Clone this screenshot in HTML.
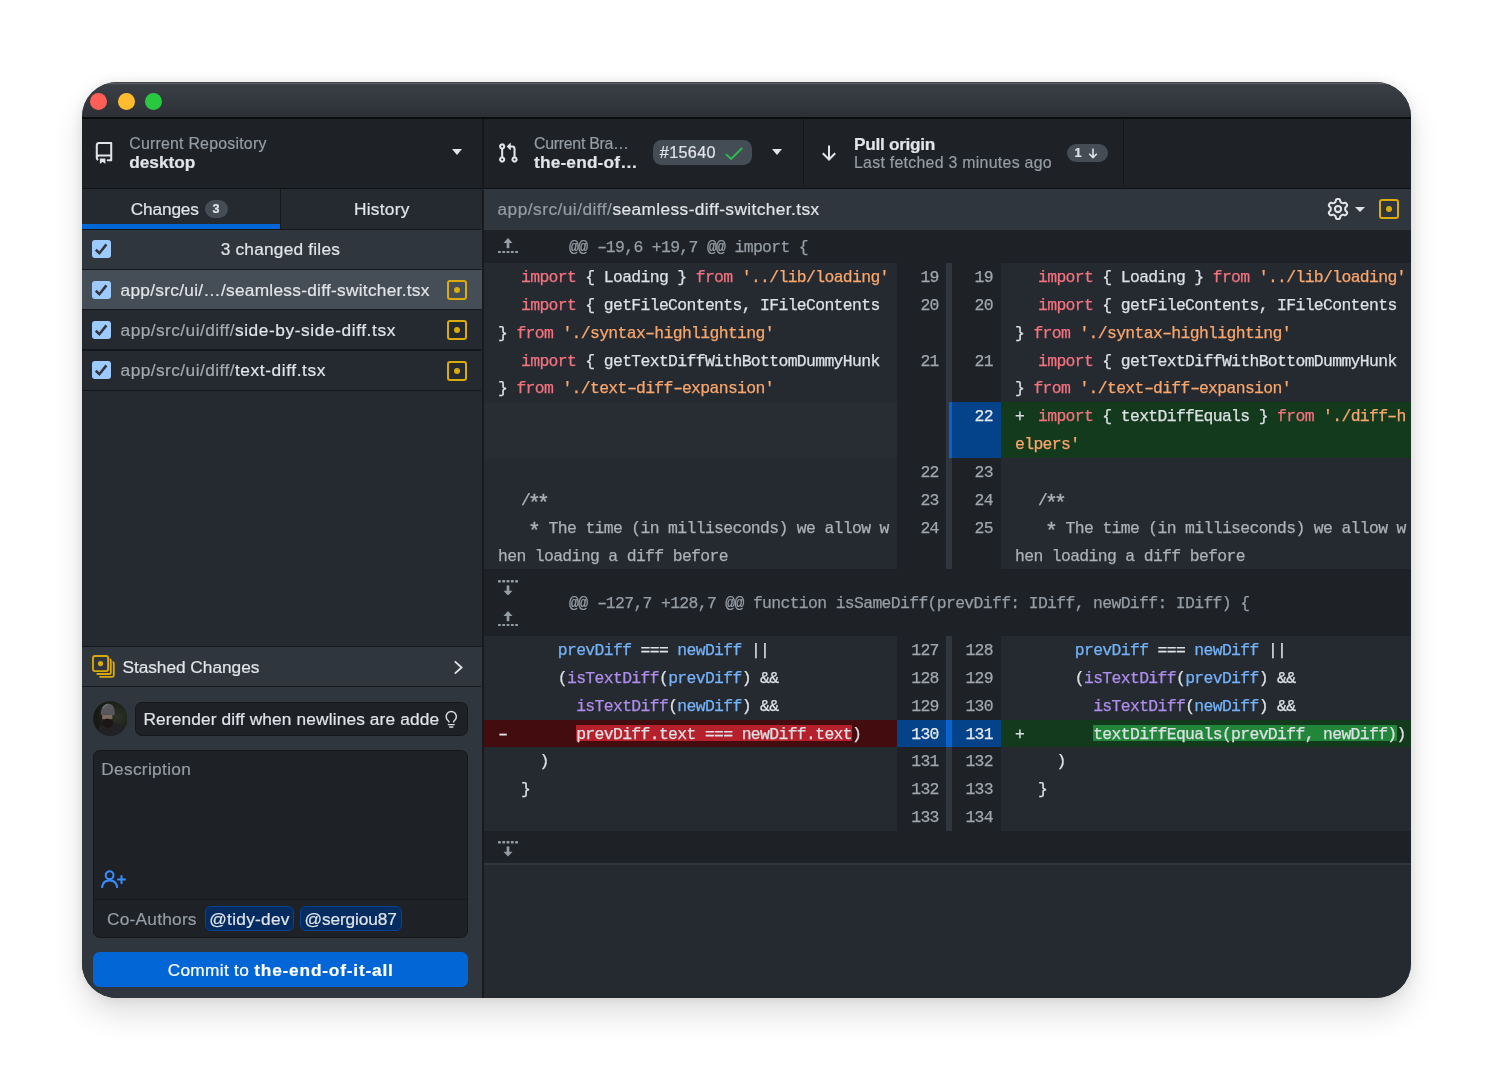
<!DOCTYPE html>
<html lang="en">
<head>
<meta charset="utf-8">
<title>GitHub Desktop</title>
<style>
*{box-sizing:border-box;margin:0;padding:0}
html,body{width:1493px;height:1080px;background:#fff;overflow:hidden}
body{font-family:"Liberation Sans",sans-serif;color:#e1e4e8;font-size:16.4px;position:relative;-webkit-text-stroke:0.2px currentColor}
.a{position:absolute;white-space:nowrap}
#shadow{position:absolute;left:82px;top:82px;width:1329px;height:916px;border-radius:35px;box-shadow:0 16px 30px rgba(0,0,0,.13),0 0 12px rgba(0,0,0,.09)}
#win{will-change:transform;position:absolute;left:82px;top:82px;width:1329px;height:916px;border-radius:35px;overflow:hidden;background:#252a31}
#titlebar{position:absolute;left:0;top:0;width:1329px;height:36px;background:linear-gradient(#3b4048,#2c3035);box-shadow:inset 0 1px 0 rgba(0,0,0,.25),inset 0 2.2px 0 rgba(255,255,255,.16)}
.tl{position:absolute;top:11px;width:17px;height:17px;border-radius:50%}
#toolbar{position:absolute;left:0;top:34.5px;width:1329px;height:73px;background:#1e2125;border-top:2.3px solid #0b0c0e;border-bottom:2.6px solid #0f1113}
.vsep{position:absolute;top:37px;width:1.5px;height:68px;background:#15181b}
.d{font-size:15px;color:#959da5}
.b{font-weight:bold}
.caret{position:absolute;width:0;height:0;border-left:5.5px solid transparent;border-right:5.5px solid transparent;border-top:6px solid #e1e4e8}
#sidebar{position:absolute;left:0;top:107px;width:401px;height:809px;background:#252a31}
#sbb{position:absolute;left:400.1px;top:107.5px;width:2px;height:809px;background:#181a1e}
#main{position:absolute;left:401px;top:107px;width:928px;height:809px;background:#252a31}
.pill{position:absolute;background:#444d56;border-radius:10px}
.cb{position:absolute;left:10.4px;width:18.5px;height:18.4px;border-radius:3px;background:#9ecbff}
.hl{position:absolute;left:0;width:399px;height:1.5px;background:#15181b}
.st{position:absolute;width:20px;height:20px;border:2px solid #dbab09;border-radius:3px}
.st i{position:absolute;left:5px;top:5px;width:6px;height:6px;border-radius:50%;background:#dbab09}
.p{color:#c3c8ce}
.input{position:absolute;background:#1e2126;border:1px solid #15181b;border-radius:7px}
.mono{font-family:"Liberation Mono",monospace;font-size:16.4px;letter-spacing:-0.642px;white-space:pre;-webkit-text-stroke:0.25px currentColor}
.hunk{position:absolute;left:0;width:928px;background:#1e2126;color:#959da5}
.ln{position:absolute;color:#959da5;text-align:right;background:#1e2126;line-height:27.86px;padding-top:1.0px}
.code{position:absolute;background:#252a31}
.t{position:absolute;line-height:27.86px;height:27.86px;color:#dde0e4}
.hy{display:inline-block;transform:scaleX(1.55)}.as{display:inline-block;transform:translate(-0.5px,3.4px) scale(1.3)}
.k{color:#f4727f}.s{color:#f9a76d}.v{color:#74b3f9}.f{color:#af8dec}.c{color:#abb1b8}
</style>
</head>
<body>
<div id="shadow"></div>
<div id="win">
<div id="titlebar">
<div class="tl" style="left:7.8px;background:#fe5f57"></div>
<div class="tl" style="left:35.6px;background:#febc2e"></div>
<div class="tl" style="left:63.2px;background:#28c840"></div>
</div>
<div id="toolbar"></div>
<div class="vsep" style="left:400px"></div>
<div class="vsep" style="left:720.5px"></div>
<div class="vsep" style="left:1040.5px"></div>
<svg class="a" style="left:11.00px;top:59.50px" width="22" height="22" viewBox="0 0 16 16" ><path fill="#e1e4e8" fill-rule="evenodd" d="M2 2.5A2.5 2.5 0 014.5 0h8.75a.75.75 0 01.75.75v12.5a.75.75 0 01-.75.75h-2.5a.75.75 0 110-1.5h1.75v-2h-8a1 1 0 00-.714 1.7.75.75 0 01-1.072 1.05A2.495 2.495 0 012 11.5v-9zm10.5-1V9h-8c-.356 0-.694.074-1 .208V2.5a1 1 0 011-1h8zM5 12.25v3.25a.25.25 0 00.4.2l1.45-1.087a.25.25 0 01.3 0L8.6 15.7a.25.25 0 00.4-.2v-3.25a.25.25 0 00-.25-.25h-3.5a.25.25 0 00-.25.25z"/></svg>
<div class="a" style="left:47.20px;top:54.00px;font-size:15.9px;line-height:1;"><span style="letter-spacing:0.227px;color:#959da5;">Current Repository</span></div>
<div class="a" style="left:47.20px;top:72.00px;font-size:17.3px;line-height:1;"><span style="letter-spacing:-0.005px;font-weight:bold;">desktop</span></div>
<div class="caret" style="left:369.5px;top:67.30000000000001px"></div>
<svg class="a" style="left:415.00px;top:59.50px" width="22" height="22" viewBox="0 0 16 16" ><path fill="#e1e4e8" fill-rule="evenodd" d="M7.177 3.073L9.573.677A.25.25 0 0110 .854v4.792a.25.25 0 01-.427.177L7.177 3.427a.25.25 0 010-.354zM3.75 2.5a.75.75 0 100 1.5.75.75 0 000-1.5zm-2.25.75a2.25 2.25 0 113 2.122v5.256a2.251 2.251 0 11-1.5 0V5.372A2.25 2.25 0 011.5 3.25zM11 2.5h-1V4h1a1 1 0 011 1v5.628a2.251 2.251 0 101.5 0V5A2.5 2.5 0 0011 2.500zm1 10.25a.75.75 0 111.5 0 .75.75 0 01-1.5 0zM3.75 12a.75.75 0 100 1.5.75.75 0 000-1.5z"/></svg>
<div class="a" style="left:452.00px;top:54.00px;font-size:15.9px;line-height:1;"><span style="letter-spacing:-0.280px;color:#959da5;">Current Bra…</span></div>
<div class="a" style="left:452.00px;top:72.00px;font-size:17.3px;line-height:1;"><span style="letter-spacing:0.174px;font-weight:bold;">the-end-of…</span></div>
<div class="pill" style="left:571.1px;top:57.80000000000001px;width:99.1px;height:25.2px;border-radius:8.5px;background:#444c56"></div>
<div class="a" style="left:577.80px;top:62.00px;font-size:16.2px;line-height:1;"><span style="letter-spacing:0.348px;">#15640</span></div>
<svg class="a" style="left:642.00px;top:63.50px" width="20" height="15" viewBox="0 0 20 15" ><path d="M1.9 8.1L7.1 13L18.200 2" fill="none" stroke="#2dba4e" stroke-width="1.9"/></svg>
<div class="caret" style="left:689.6px;top:67.30000000000001px"></div>
<svg class="a" style="left:739.00px;top:62.00px" width="16" height="18" viewBox="0 0 16 18" ><path d="M8 1.5V15.5M1.8 9.3L8 15.5L14.2 9.3" fill="none" stroke="#e1e4e8" stroke-width="2"/></svg>
<div class="a" style="left:772.00px;top:54.00px;font-size:17.3px;line-height:1;"><span style="letter-spacing:-0.307px;font-weight:bold;">Pull origin</span></div>
<div class="a" style="left:772.00px;top:73.00px;font-size:15.9px;line-height:1;"><span style="letter-spacing:0.271px;color:#959da5;">Last fetched 3 minutes ago</span></div>
<div class="pill" style="left:984.5px;top:61.5px;width:41.5px;height:18.5px;border-radius:10px;background:#444c56"></div>
<div class="a" style="left:992.50px;top:65.00px;font-size:12.6px;line-height:1;"><span style="letter-spacing:0.000px;font-weight:bold;">1</span></div>
<svg class="a" style="left:1006.00px;top:65.50px" width="10" height="11" viewBox="0 0 10 11" ><path d="M5 .5V9.5M1.2 5.8L5 9.6L8.8 5.8" fill="none" stroke="#e1e4e8" stroke-width="1.6"/></svg>
<div id="sidebar"></div>
<div class="a" style="left:0;top:142.2px;width:197.5px;height:4.5px;background:#0366d6"></div>
<div class="a" style="left:197.5px;top:107px;width:1.4px;height:40px;background:#15181b"></div>
<div class="a" style="left:48.80px;top:119.00px;font-size:17.3px;line-height:1;"><span style="letter-spacing:-0.175px;">Changes</span></div>
<div class="pill" style="left:123px;top:117.80000000000001px;width:23.2px;height:18.2px;background:#444c56"></div>
<div class="a" style="left:130.60px;top:121.00px;font-size:12.6px;line-height:1;"><span style="letter-spacing:0.000px;font-weight:bold;">3</span></div>
<div class="a" style="left:272.00px;top:119.00px;font-size:17.3px;line-height:1;"><span style="letter-spacing:0.262px;">History</span></div>
<div class="hl" style="top:146.6px"></div>
<div class="a" style="left:0;top:147.6px;width:400.4px;height:39.7px;background:#2f363d"></div>
<div class="cb" style="top:158.00px"><svg class="a" style="left:0;top:0" width="18.5" height="18.5" viewBox="0 0 18.5 18.5"><path d="M3.800 9.800L7.400 13.200L14.400 4.400" fill="none" stroke="#33363a" stroke-width="2.600"/></svg></div>
<div class="a" style="left:138.70px;top:159.00px;font-size:17.3px;line-height:1;"><span style="letter-spacing:0.209px;">3 changed files</span></div>
<div class="hl" style="top:186.60px"></div>
<div class="a" style="left:0;top:188.00px;width:400.4px;height:38.7px;background:#454d57"></div>
<div class="cb" style="top:198.50px"><svg class="a" style="left:0;top:0" width="18.5" height="18.5" viewBox="0 0 18.5 18.5"><path d="M3.800 9.800L7.400 13.200L14.400 4.400" fill="none" stroke="#33363a" stroke-width="2.600"/></svg></div>
<div class="a" style="left:38.60px;top:200.00px;font-size:17.3px;line-height:1;"><span style="letter-spacing:0.274px;">app/src/ui/…/seamless-diff-switcher.tsx</span></div>
<div class="st" style="left:365.3px;top:198.00px"><i></i></div>
<div class="hl" style="top:226.90px"></div>
<div class="cb" style="top:238.80px"><svg class="a" style="left:0;top:0" width="18.5" height="18.5" viewBox="0 0 18.5 18.5"><path d="M3.800 9.800L7.400 13.200L14.400 4.400" fill="none" stroke="#33363a" stroke-width="2.600"/></svg></div>
<div class="a" style="left:38.60px;top:240.00px;font-size:17.3px;line-height:1;"><span style="letter-spacing:0.441px;color:#a3aab1;">app/src/ui/diff/</span><span style="letter-spacing:0.590px;">side-by-side-diff.tsx</span></div>
<div class="st" style="left:365.3px;top:238.30px"><i></i></div>
<div class="hl" style="top:267.20px"></div>
<div class="cb" style="top:279.10px"><svg class="a" style="left:0;top:0" width="18.5" height="18.5" viewBox="0 0 18.5 18.5"><path d="M3.800 9.800L7.400 13.200L14.400 4.400" fill="none" stroke="#33363a" stroke-width="2.600"/></svg></div>
<div class="a" style="left:38.60px;top:280.00px;font-size:17.3px;line-height:1;"><span style="letter-spacing:0.441px;color:#a3aab1;">app/src/ui/diff/</span><span style="letter-spacing:0.598px;">text-diff.tsx</span></div>
<div class="st" style="left:365.3px;top:278.60px"><i></i></div>
<div class="hl" style="top:307.8px"></div>
<div class="a" style="left:0;top:565px;width:400.4px;height:351px;background:#2f363d"></div>
<div class="hl" style="top:563.6px"></div>
<div class="hl" style="top:603.8px"></div>
<svg class="a" style="left:10.30px;top:573.20px" width="23" height="23" viewBox="0 0 23 23" ><g fill="none" stroke="#d9a90a" stroke-width="1.85"><rect x="1" y="1" width="15.100" height="15.100" rx="2"/><path d="M17.600 4.200Q18.800 4.300 18.800 5.700V17.400Q18.800 19 17.200 19H4.600M20.600 7Q21.800 7.100 21.800 8.500V20.300Q21.800 21.800 20.300 21.800H7.400"/></g><circle cx="8.500" cy="8.600" r="2.600" fill="#dbab09"/></svg>
<div class="a" style="left:40.40px;top:577.00px;font-size:17.3px;line-height:1;"><span style="letter-spacing:-0.031px;">Stashed Changes</span></div>
<svg class="a" style="left:371.20px;top:577.50px" width="11" height="15" viewBox="0 0 11 15" ><path d="M1.800 1.300L8.600 7.500L1.800 13.700" fill="none" stroke="#e1e4e8" stroke-width="1.800"/></svg>
<svg class="a" style="left:10.70px;top:619.30px" width="34.8" height="35" viewBox="0 0 34.8 35" ><defs><clipPath id="avc"><circle cx="17.4" cy="17.5" r="17.300"/></clipPath><radialGradient id="avg" cx="70%" cy="45%" r="75%"><stop offset="0" stop-color="#2c3326"/><stop offset=".55" stop-color="#1d2119"/><stop offset="1" stop-color="#131511"/></radialGradient><filter id="avb" x="-10%" y="-10%" width="120%" height="120%"><feGaussianBlur stdDeviation=".6"/></filter></defs><g clip-path="url(#avc)"><rect width="35" height="35" fill="url(#avg)"/><g filter="url(#avb)"><path d="M3.500 36L5 28C6.500 25 9.500 23.500 12 22.800L20.500 21.500C24 22.500 28.500 24.500 31.500 28L34 36z" fill="#232427"/><path d="M9.200 13.500h10.200v5.500c0 2-1.500 3.500-5.100 3.500s-5.100-1.500-5.100-3.500z" fill="#7f6c61"/><path d="M9.400 17.800c1.500.8 3 .600 5-.200 2 .800 3.500 1 5.200.200l.6 5c-.5 2.500-2.500 4-5.500 4s-5-1.500-5.600-4z" fill="#1c1917"/><path d="M7.800 14.200C7.200 7 11 2.700 15.300 2.700c4.700 0 7 4.300 6.300 11.800C18 13 11.500 12.800 7.800 14.200z" fill="#58595b"/><path d="M10 7c1.500-2.500 3.500-3.500 5.500-3.500" stroke="#6b6d6e" stroke-width="1.500" fill="none"/></g></g></svg>
<div class="input" style="left:52.5px;top:619.6px;width:333.5px;height:34.4px"></div>
<div class="a" style="left:61.40px;top:629.00px;font-size:17.3px;line-height:1;"><span style="letter-spacing:0.140px;">Rerender diff when newlines are adde</span></div>
<svg class="a" style="left:363.00px;top:627.50px" width="13" height="18.5" viewBox="0 0 13 18.500" ><g fill="none" stroke="#d9dce0" stroke-width="1.500"><path d="M4 12.400C4 11.400 3.400 10.900 2.650 10.200A5.100 5.100 0 1 1 9.850 10.200C9.100 10.900 8.500 11.400 8.500 12.400"/><path d="M2.800 14.600H9.700M4.200 17H8.300" stroke-width="1.400"/></g></svg>
<div class="input" style="left:10.799999999999997px;top:668px;width:375.4px;height:187.8px"></div>
<div class="a" style="left:19.20px;top:679.00px;font-size:17.3px;line-height:1;"><span style="letter-spacing:0.327px;color:#959da5;">Description</span></div>
<svg class="a" style="left:19.00px;top:788.00px" width="26" height="19" viewBox="0 0 26 19" ><g fill="none" stroke="#388bfd" stroke-width="2.100"><circle cx="8.600" cy="5.200" r="3.900"/><path d="M.9 17.800c.6-4.600 3.600-7.400 7.700-7.400s7.100 2.800 7.700 7.400"/><path d="M20.500 5.300v8.600M16.200 9.600h8.600" stroke-width="2"/></g></svg>
<div class="a" style="left:11.5px;top:817px;width:374px;height:1.3px;background:#15181b"></div>
<div class="a" style="left:25.00px;top:829.00px;font-size:17.3px;line-height:1;"><span style="letter-spacing:0.234px;color:#959da5;">Co-Authors</span></div>
<div class="a" style="left:122.70px;top:824.3px;width:89.3px;height:24.7px;border-radius:6px;background:#042c60;border:1.3px solid #0a4291"></div>
<div class="a" style="left:127.30px;top:829.00px;font-size:17.3px;line-height:1;"><span style="letter-spacing:0.270px;">@tidy-dev</span></div>
<div class="a" style="left:217.90px;top:824.3px;width:101.9px;height:24.7px;border-radius:6px;background:#042c60;border:1.3px solid #0a4291"></div>
<div class="a" style="left:222.50px;top:829.00px;font-size:17.3px;line-height:1;"><span style="letter-spacing:-0.127px;">@sergiou87</span></div>
<div class="a" style="left:10.599999999999994px;top:870px;width:375.6px;height:35px;border-radius:6.5px;background:#0366d6"></div>
<div class="a" style="left:85.70px;top:880.00px;font-size:17.3px;line-height:1;"><span style="letter-spacing:0.297px;color:#fff;">Commit to </span><span style="letter-spacing:0.807px;font-weight:bold;color:#fff;">the-end-of-it-all</span></div>
<div id="main"></div>
<div class="a" style="left:401px;top:107px;width:928px;height:40.5px;background:#2f363d"></div>
<div class="a" style="left:415.50px;top:119.00px;font-size:17.3px;line-height:1;"><span style="letter-spacing:0.475px;color:#959da5;">app/src/ui/diff/</span><span style="letter-spacing:0.409px;">seamless-diff-switcher.tsx</span></div>
<svg class="a" style="left:1244.50px;top:116.00px" width="22" height="22" viewBox="0 0 16 16" ><path fill="#e1e4e8" fill-rule="evenodd" d="M7.429 1.525a6.593 6.593 0 011.142 0c.036.003.108.036.137.146l.289 1.105c.147.560.55.967.997 1.189.174.086.341.183.501.29.417.278.97.423 1.530.27l1.102-.303c.11-.03.175.016.195.046.219.31.41.641.573.989.014.031.022.11-.059.19l-.815.806c-.411.406-.562.957-.53 1.456a4.588 4.588 0 010 .582c-.032.499.119 1.050.53 1.456l.815.806c.08.08.073.159.059.19a6.494 6.494 0 01-.573.990c-.02.029-.086.074-.195.045l-1.103-.303c-.559-.153-1.112-.008-1.529.27-.16.107-.327.204-.5.290-.449.222-.851.628-.998 1.189l-.289 1.105c-.029.110-.101.143-.137.146a6.613 6.613 0 01-1.142 0c-.036-.003-.108-.037-.137-.146l-.289-1.105c-.147-.560-.55-.967-.997-1.189a4.502 4.502 0 01-.501-.29c-.417-.278-.97-.423-1.530-.270l-1.102.303c-.110.030-.175-.016-.195-.046a6.492 6.492 0 01-.573-.989c-.014-.031-.022-.110.059-.190l.815-.806c.411-.406.562-.957.530-1.456a4.587 4.587 0 010-.582c.032-.499-.119-1.050-.530-1.456l-.815-.806c-.080-.080-.073-.159-.059-.190a6.440 6.440 0 01.573-.99c.020-.029.086-.075.195-.045l1.103.303c.559.153 1.112.008 1.529-.270.160-.107.327-.204.500-.29.449-.222.851-.628.998-1.189l.289-1.105c.029-.110.101-.143.137-.146zM8 0c-.236 0-.47.010-.701.030-.743.065-1.290.615-1.458 1.261l-.290 1.106c-.017.066-.078.158-.211.224a5.994 5.994 0 00-.668.386c-.123.082-.233.090-.300.071L3.270 2.776c-.644-.177-1.392.020-1.820.63a7.977 7.977 0 00-.704 1.217c-.315.675-.111 1.422.363 1.891l.815.806c.050.048.098.147.088.294a6.084 6.084 0 000 .772c.010.147-.038.246-.088.294l-.815.806c-.474.469-.678 1.216-.363 1.891.200.428.436.835.704 1.218.428.609 1.176.806 1.820.630l1.103-.303c.066-.019.176-.011.299.071.213.143.436.272.668.386.133.066.194.158.212.224l.289 1.106c.169.646.715 1.196 1.458 1.260a8.094 8.094 0 001.402 0c.743-.064 1.290-.614 1.458-1.260l.290-1.106c.017-.066.078-.158.211-.224a5.980 5.980 0 00.668-.386c.123-.082.233-.090.300-.071l1.102.302c.644.177 1.392-.020 1.820-.630.268-.382.505-.789.704-1.217.315-.675.111-1.422-.364-1.891l-.814-.806c-.050-.048-.098-.147-.088-.294a6.100 6.100 0 000-.772c-.010-.147.039-.246.088-.294l.814-.806c.475-.469.679-1.216.364-1.891a7.992 7.992 0 00-.704-1.218c-.428-.609-1.176-.806-1.820-.630l-1.103.303c-.066.019-.176.011-.299-.071a5.991 5.991 0 00-.668-.386c-.133-.066-.194-.158-.212-.224L10.160 1.290C9.990.645 9.444.095 8.701.031A8.094 8.094 0 008 0zm1.500 8a1.500 1.500 0 11-3 0 1.500 1.500 0 013 0zM11 8a3 3 0 11-6 0 3 3 0 016 0z"/></svg>
<div class="caret" style="left:1273px;top:124.5px;border-left-width:5px;border-right-width:5px;border-top-width:5.5px"></div>
<div class="st" style="left:1297px;top:117px"><i></i></div>
<div class="hunk" style="left:401px;top:147.50px;height:33.50px"></div>
<svg class="a" style="left:416.00px;top:155.90px" width="20" height="15.6" viewBox="0 0 20 15.6" ><g fill="#959da5"><rect x="0" y="13.1" width="2.8" height="2.5" rx=".5"/><rect x="4.3" y="13.1" width="2.8" height="2.5" rx=".5"/><rect x="8.6" y="13.1" width="2.8" height="2.5" rx=".5"/><rect x="12.9" y="13.1" width="2.8" height="2.5" rx=".5"/><rect x="17.2" y="13.1" width="2.8" height="2.5" rx=".5"/><rect x="8.65" y="4.200" width="2.7" height="6"/><path d="M5.500 4.900H14.500L10 0z"/></g></svg>
<div class="a mono" style="left:487.00px;top:151.50px;line-height:27.86px;color:#959da5">@@ <span class="hy">-</span>19,6 +19,7 @@ import {</div>
<div class="code" style="left:401.00px;top:181.00px;width:414.40px;height:27.86px;background:#252a31"></div>
<div class="a mono t" style="left:439.00px;top:182.00px;"><span class="k">import</span> { Loading } <span class="k">from</span> <span class="s">'../lib/loading'</span></div>
<div class="ln mono" style="left:815.40px;top:181.00px;width:48.90px;height:27.86px;padding-right:7.5px;background:#1e2126;color:#a0a7ae">19</div>
<div class="a" style="left:864.30px;top:181.00px;width:2.85px;height:27.86px;background:#2f363d"></div>
<div class="a" style="left:867.15px;top:181.00px;width:2.85px;height:27.86px;background:#2f363d"></div>
<div class="ln mono" style="left:870.00px;top:181.00px;width:48.50px;height:27.86px;padding-right:7.5px;background:#1e2126;color:#a0a7ae">19</div>
<div class="code" style="left:918.50px;top:181.00px;width:410.50px;height:27.86px;background:#252a31"></div>
<div class="a mono t" style="left:956.00px;top:182.00px;"><span class="k">import</span> { Loading } <span class="k">from</span> <span class="s">'../lib/loading'</span></div>
<div class="code" style="left:401.00px;top:208.86px;width:414.40px;height:55.72px;background:#252a31"></div>
<div class="a mono t" style="left:439.00px;top:209.86px;"><span class="k">import</span> { getFileContents, IFileContents</div>
<div class="a mono t" style="left:416.00px;top:237.72px;">} <span class="k">from</span> <span class="s">'./syntax<span class="hy">-</span>highlighting'</span></div>
<div class="ln mono" style="left:815.40px;top:208.86px;width:48.90px;height:55.72px;padding-right:7.5px;background:#1e2126;color:#a0a7ae">20</div>
<div class="a" style="left:864.30px;top:208.86px;width:2.85px;height:55.72px;background:#2f363d"></div>
<div class="a" style="left:867.15px;top:208.86px;width:2.85px;height:55.72px;background:#2f363d"></div>
<div class="ln mono" style="left:870.00px;top:208.86px;width:48.50px;height:55.72px;padding-right:7.5px;background:#1e2126;color:#a0a7ae">20</div>
<div class="code" style="left:918.50px;top:208.86px;width:410.50px;height:55.72px;background:#252a31"></div>
<div class="a mono t" style="left:956.00px;top:209.86px;"><span class="k">import</span> { getFileContents, IFileContents</div>
<div class="a mono t" style="left:933.00px;top:237.72px;">} <span class="k">from</span> <span class="s">'./syntax<span class="hy">-</span>highlighting'</span></div>
<div class="code" style="left:401.00px;top:264.58px;width:414.40px;height:55.72px;background:#252a31"></div>
<div class="a mono t" style="left:439.00px;top:265.58px;"><span class="k">import</span> { getTextDiffWithBottomDummyHunk</div>
<div class="a mono t" style="left:416.00px;top:293.44px;">} <span class="k">from</span> <span class="s">'./text<span class="hy">-</span>diff<span class="hy">-</span>expansion'</span></div>
<div class="ln mono" style="left:815.40px;top:264.58px;width:48.90px;height:55.72px;padding-right:7.5px;background:#1e2126;color:#a0a7ae">21</div>
<div class="a" style="left:864.30px;top:264.58px;width:2.85px;height:55.72px;background:#2f363d"></div>
<div class="a" style="left:867.15px;top:264.58px;width:2.85px;height:55.72px;background:#2f363d"></div>
<div class="ln mono" style="left:870.00px;top:264.58px;width:48.50px;height:55.72px;padding-right:7.5px;background:#1e2126;color:#a0a7ae">21</div>
<div class="code" style="left:918.50px;top:264.58px;width:410.50px;height:55.72px;background:#252a31"></div>
<div class="a mono t" style="left:956.00px;top:265.58px;"><span class="k">import</span> { getTextDiffWithBottomDummyHunk</div>
<div class="a mono t" style="left:933.00px;top:293.44px;">} <span class="k">from</span> <span class="s">'./text<span class="hy">-</span>diff<span class="hy">-</span>expansion'</span></div>
<div class="code" style="left:401.00px;top:320.30px;width:414.40px;height:55.72px;background:#282d33"></div>
<div class="a mono t" style="left:439.00px;top:321.30px;"></div>
<div class="a mono t" style="left:416.00px;top:349.16px;"></div>
<div class="ln mono" style="left:815.40px;top:320.30px;width:48.90px;height:55.72px;padding-right:7.5px;background:#1e2126;color:#a0a7ae"></div>
<div class="a" style="left:864.30px;top:320.30px;width:2.85px;height:55.72px;background:#2f363d"></div>
<div class="a" style="left:867.15px;top:320.30px;width:2.85px;height:55.72px;background:#0b62cf"></div>
<div class="ln mono" style="left:870.00px;top:320.30px;width:48.50px;height:55.72px;padding-right:7.5px;background:#044289;color:#e6e9ec">22</div>
<div class="code" style="left:918.50px;top:320.30px;width:410.50px;height:55.72px;background:#143a1d"></div>
<div class="a mono t" style="left:933.00px;top:321.30px;">+</div>
<div class="a mono t" style="left:956.00px;top:321.30px;"><span class="k">import</span> { textDiffEquals } <span class="k">from</span> <span class="s">'./diff<span class="hy">-</span>h</span></div>
<div class="a mono t" style="left:933.00px;top:349.16px;"><span class="s">elpers'</span></div>
<div class="code" style="left:401.00px;top:376.02px;width:414.40px;height:27.86px;background:#252a31"></div>
<div class="a mono t" style="left:439.00px;top:377.02px;"></div>
<div class="ln mono" style="left:815.40px;top:376.02px;width:48.90px;height:27.86px;padding-right:7.5px;background:#1e2126;color:#a0a7ae">22</div>
<div class="a" style="left:864.30px;top:376.02px;width:2.85px;height:27.86px;background:#2f363d"></div>
<div class="a" style="left:867.15px;top:376.02px;width:2.85px;height:27.86px;background:#2f363d"></div>
<div class="ln mono" style="left:870.00px;top:376.02px;width:48.50px;height:27.86px;padding-right:7.5px;background:#1e2126;color:#a0a7ae">23</div>
<div class="code" style="left:918.50px;top:376.02px;width:410.50px;height:27.86px;background:#252a31"></div>
<div class="a mono t" style="left:956.00px;top:377.02px;"></div>
<div class="code" style="left:401.00px;top:403.88px;width:414.40px;height:27.86px;background:#252a31"></div>
<div class="a mono t" style="left:439.00px;top:404.88px;"><span class="c">/<span class="as">*</span><span class="as">*</span></span></div>
<div class="ln mono" style="left:815.40px;top:403.88px;width:48.90px;height:27.86px;padding-right:7.5px;background:#1e2126;color:#a0a7ae">23</div>
<div class="a" style="left:864.30px;top:403.88px;width:2.85px;height:27.86px;background:#2f363d"></div>
<div class="a" style="left:867.15px;top:403.88px;width:2.85px;height:27.86px;background:#2f363d"></div>
<div class="ln mono" style="left:870.00px;top:403.88px;width:48.50px;height:27.86px;padding-right:7.5px;background:#1e2126;color:#a0a7ae">24</div>
<div class="code" style="left:918.50px;top:403.88px;width:410.50px;height:27.86px;background:#252a31"></div>
<div class="a mono t" style="left:956.00px;top:404.88px;"><span class="c">/<span class="as">*</span><span class="as">*</span></span></div>
<div class="code" style="left:401.00px;top:431.74px;width:414.40px;height:55.72px;background:#252a31"></div>
<div class="a mono t" style="left:439.00px;top:432.74px;"><span class="c"> <span class="as">*</span> The time (in milliseconds) we allow w</span></div>
<div class="a mono t" style="left:416.00px;top:460.60px;"><span class="c">hen loading a diff before</span></div>
<div class="ln mono" style="left:815.40px;top:431.74px;width:48.90px;height:55.72px;padding-right:7.5px;background:#1e2126;color:#a0a7ae">24</div>
<div class="a" style="left:864.30px;top:431.74px;width:2.85px;height:55.72px;background:#2f363d"></div>
<div class="a" style="left:867.15px;top:431.74px;width:2.85px;height:55.72px;background:#2f363d"></div>
<div class="ln mono" style="left:870.00px;top:431.74px;width:48.50px;height:55.72px;padding-right:7.5px;background:#1e2126;color:#a0a7ae">25</div>
<div class="code" style="left:918.50px;top:431.74px;width:410.50px;height:55.72px;background:#252a31"></div>
<div class="a mono t" style="left:956.00px;top:432.74px;"><span class="c"> <span class="as">*</span> The time (in milliseconds) we allow w</span></div>
<div class="a mono t" style="left:933.00px;top:460.60px;"><span class="c">hen loading a diff before</span></div>
<div class="hunk" style="left:401px;top:487.46px;height:66.50px"></div>
<svg class="a" style="left:416.00px;top:497.76px" width="20" height="15.6" viewBox="0 0 20 15.6" ><g fill="#959da5"><rect x="0" y="0" width="2.8" height="2.5" rx=".5"/><rect x="4.3" y="0" width="2.8" height="2.5" rx=".5"/><rect x="8.6" y="0" width="2.8" height="2.5" rx=".5"/><rect x="12.9" y="0" width="2.8" height="2.5" rx=".5"/><rect x="17.2" y="0" width="2.8" height="2.5" rx=".5"/><rect x="8.65" y="5.4" width="2.7" height="6"/><path d="M5.5 10.700H14.500L10 15.600z"/></g></svg>
<svg class="a" style="left:416.00px;top:528.66px" width="20" height="15.6" viewBox="0 0 20 15.6" ><g fill="#959da5"><rect x="0" y="13.1" width="2.8" height="2.5" rx=".5"/><rect x="4.3" y="13.1" width="2.8" height="2.5" rx=".5"/><rect x="8.6" y="13.1" width="2.8" height="2.5" rx=".5"/><rect x="12.9" y="13.1" width="2.8" height="2.5" rx=".5"/><rect x="17.2" y="13.1" width="2.8" height="2.5" rx=".5"/><rect x="8.65" y="4.200" width="2.7" height="6"/><path d="M5.500 4.900H14.500L10 0z"/></g></svg>
<div class="a mono" style="left:487.00px;top:507.96px;line-height:27.86px;color:#959da5">@@ <span class="hy">-</span>127,7 +128,7 @@ function isSameDiff(prevDiff: IDiff, newDiff: IDiff) {</div>
<div class="code" style="left:401.00px;top:553.96px;width:414.40px;height:27.86px;background:#252a31"></div>
<div class="a mono t" style="left:439.00px;top:554.96px;">    <span class="v">prevDiff</span> === <span class="v">newDiff</span> ||</div>
<div class="ln mono" style="left:815.40px;top:553.96px;width:48.90px;height:27.86px;padding-right:7.5px;background:#1e2126;color:#a0a7ae">127</div>
<div class="a" style="left:864.30px;top:553.96px;width:2.85px;height:27.86px;background:#2f363d"></div>
<div class="a" style="left:867.15px;top:553.96px;width:2.85px;height:27.86px;background:#2f363d"></div>
<div class="ln mono" style="left:870.00px;top:553.96px;width:48.50px;height:27.86px;padding-right:7.5px;background:#1e2126;color:#a0a7ae">128</div>
<div class="code" style="left:918.50px;top:553.96px;width:410.50px;height:27.86px;background:#252a31"></div>
<div class="a mono t" style="left:956.00px;top:554.96px;">    <span class="v">prevDiff</span> === <span class="v">newDiff</span> ||</div>
<div class="code" style="left:401.00px;top:581.82px;width:414.40px;height:27.86px;background:#252a31"></div>
<div class="a mono t" style="left:439.00px;top:582.82px;">    (<span class="f">isTextDiff</span>(<span class="v">prevDiff</span>) &amp;&amp;</div>
<div class="ln mono" style="left:815.40px;top:581.82px;width:48.90px;height:27.86px;padding-right:7.5px;background:#1e2126;color:#a0a7ae">128</div>
<div class="a" style="left:864.30px;top:581.82px;width:2.85px;height:27.86px;background:#2f363d"></div>
<div class="a" style="left:867.15px;top:581.82px;width:2.85px;height:27.86px;background:#2f363d"></div>
<div class="ln mono" style="left:870.00px;top:581.82px;width:48.50px;height:27.86px;padding-right:7.5px;background:#1e2126;color:#a0a7ae">129</div>
<div class="code" style="left:918.50px;top:581.82px;width:410.50px;height:27.86px;background:#252a31"></div>
<div class="a mono t" style="left:956.00px;top:582.82px;">    (<span class="f">isTextDiff</span>(<span class="v">prevDiff</span>) &amp;&amp;</div>
<div class="code" style="left:401.00px;top:609.68px;width:414.40px;height:27.86px;background:#252a31"></div>
<div class="a mono t" style="left:439.00px;top:610.68px;">      <span class="f">isTextDiff</span>(<span class="v">newDiff</span>) &amp;&amp;</div>
<div class="ln mono" style="left:815.40px;top:609.68px;width:48.90px;height:27.86px;padding-right:7.5px;background:#1e2126;color:#a0a7ae">129</div>
<div class="a" style="left:864.30px;top:609.68px;width:2.85px;height:27.86px;background:#2f363d"></div>
<div class="a" style="left:867.15px;top:609.68px;width:2.85px;height:27.86px;background:#2f363d"></div>
<div class="ln mono" style="left:870.00px;top:609.68px;width:48.50px;height:27.86px;padding-right:7.5px;background:#1e2126;color:#a0a7ae">130</div>
<div class="code" style="left:918.50px;top:609.68px;width:410.50px;height:27.86px;background:#252a31"></div>
<div class="a mono t" style="left:956.00px;top:610.68px;">      <span class="f">isTextDiff</span>(<span class="v">newDiff</span>) &amp;&amp;</div>
<div class="code" style="left:401.00px;top:637.54px;width:414.40px;height:27.86px;background:#430d10"></div>
<div class="a mono t" style="left:416.00px;top:638.54px;"><span class="hy">-</span></div>
<div class="a" style="left:494.20px;top:642.84px;width:276.00px;height:16.6px;background:#b5202b"></div>
<div class="a mono t" style="left:439.00px;top:638.54px;">      prevDiff.text === newDiff.text)</div>
<div class="ln mono" style="left:815.40px;top:637.54px;width:48.90px;height:27.86px;padding-right:7.5px;background:#044289;color:#e6e9ec">130</div>
<div class="a" style="left:864.30px;top:637.54px;width:2.85px;height:27.86px;background:#0b62cf"></div>
<div class="a" style="left:867.15px;top:637.54px;width:2.85px;height:27.86px;background:#0b62cf"></div>
<div class="ln mono" style="left:870.00px;top:637.54px;width:48.50px;height:27.86px;padding-right:7.5px;background:#044289;color:#e6e9ec">131</div>
<div class="code" style="left:918.50px;top:637.54px;width:410.50px;height:27.86px;background:#143a1d"></div>
<div class="a mono t" style="left:933.00px;top:638.54px;">+</div>
<div class="a" style="left:1011.20px;top:642.84px;width:303.60px;height:16.6px;background:#22863a"></div>
<div class="a mono t" style="left:956.00px;top:638.54px;">      textDiffEquals(prevDiff, newDiff))</div>
<div class="code" style="left:401.00px;top:665.40px;width:414.40px;height:27.86px;background:#252a31"></div>
<div class="a mono t" style="left:439.00px;top:666.40px;">  )</div>
<div class="ln mono" style="left:815.40px;top:665.40px;width:48.90px;height:27.86px;padding-right:7.5px;background:#1e2126;color:#a0a7ae">131</div>
<div class="a" style="left:864.30px;top:665.40px;width:2.85px;height:27.86px;background:#2f363d"></div>
<div class="a" style="left:867.15px;top:665.40px;width:2.85px;height:27.86px;background:#2f363d"></div>
<div class="ln mono" style="left:870.00px;top:665.40px;width:48.50px;height:27.86px;padding-right:7.5px;background:#1e2126;color:#a0a7ae">132</div>
<div class="code" style="left:918.50px;top:665.40px;width:410.50px;height:27.86px;background:#252a31"></div>
<div class="a mono t" style="left:956.00px;top:666.40px;">  )</div>
<div class="code" style="left:401.00px;top:693.26px;width:414.40px;height:27.86px;background:#252a31"></div>
<div class="a mono t" style="left:439.00px;top:694.26px;">}</div>
<div class="ln mono" style="left:815.40px;top:693.26px;width:48.90px;height:27.86px;padding-right:7.5px;background:#1e2126;color:#a0a7ae">132</div>
<div class="a" style="left:864.30px;top:693.26px;width:2.85px;height:27.86px;background:#2f363d"></div>
<div class="a" style="left:867.15px;top:693.26px;width:2.85px;height:27.86px;background:#2f363d"></div>
<div class="ln mono" style="left:870.00px;top:693.26px;width:48.50px;height:27.86px;padding-right:7.5px;background:#1e2126;color:#a0a7ae">133</div>
<div class="code" style="left:918.50px;top:693.26px;width:410.50px;height:27.86px;background:#252a31"></div>
<div class="a mono t" style="left:956.00px;top:694.26px;">}</div>
<div class="code" style="left:401.00px;top:721.12px;width:414.40px;height:27.86px;background:#252a31"></div>
<div class="a mono t" style="left:439.00px;top:722.12px;"></div>
<div class="ln mono" style="left:815.40px;top:721.12px;width:48.90px;height:27.86px;padding-right:7.5px;background:#1e2126;color:#a0a7ae">133</div>
<div class="a" style="left:864.30px;top:721.12px;width:2.85px;height:27.86px;background:#2f363d"></div>
<div class="a" style="left:867.15px;top:721.12px;width:2.85px;height:27.86px;background:#2f363d"></div>
<div class="ln mono" style="left:870.00px;top:721.12px;width:48.50px;height:27.86px;padding-right:7.5px;background:#1e2126;color:#a0a7ae">134</div>
<div class="code" style="left:918.50px;top:721.12px;width:410.50px;height:27.86px;background:#252a31"></div>
<div class="a mono t" style="left:956.00px;top:722.12px;"></div>
<div class="hunk" style="left:401px;top:748.98px;height:32.50px"></div>
<svg class="a" style="left:416.00px;top:759.28px" width="20" height="15.6" viewBox="0 0 20 15.6" ><g fill="#959da5"><rect x="0" y="0" width="2.8" height="2.5" rx=".5"/><rect x="4.3" y="0" width="2.8" height="2.5" rx=".5"/><rect x="8.6" y="0" width="2.8" height="2.5" rx=".5"/><rect x="12.9" y="0" width="2.8" height="2.5" rx=".5"/><rect x="17.2" y="0" width="2.8" height="2.5" rx=".5"/><rect x="8.65" y="5.4" width="2.7" height="6"/><path d="M5.5 10.700H14.500L10 15.600z"/></g></svg>
<div class="a" style="left:401px;top:781.48px;width:928px;height:1.3px;background:#30363d"></div>
<div id="sbb"></div>
</div>
</body>
</html>
